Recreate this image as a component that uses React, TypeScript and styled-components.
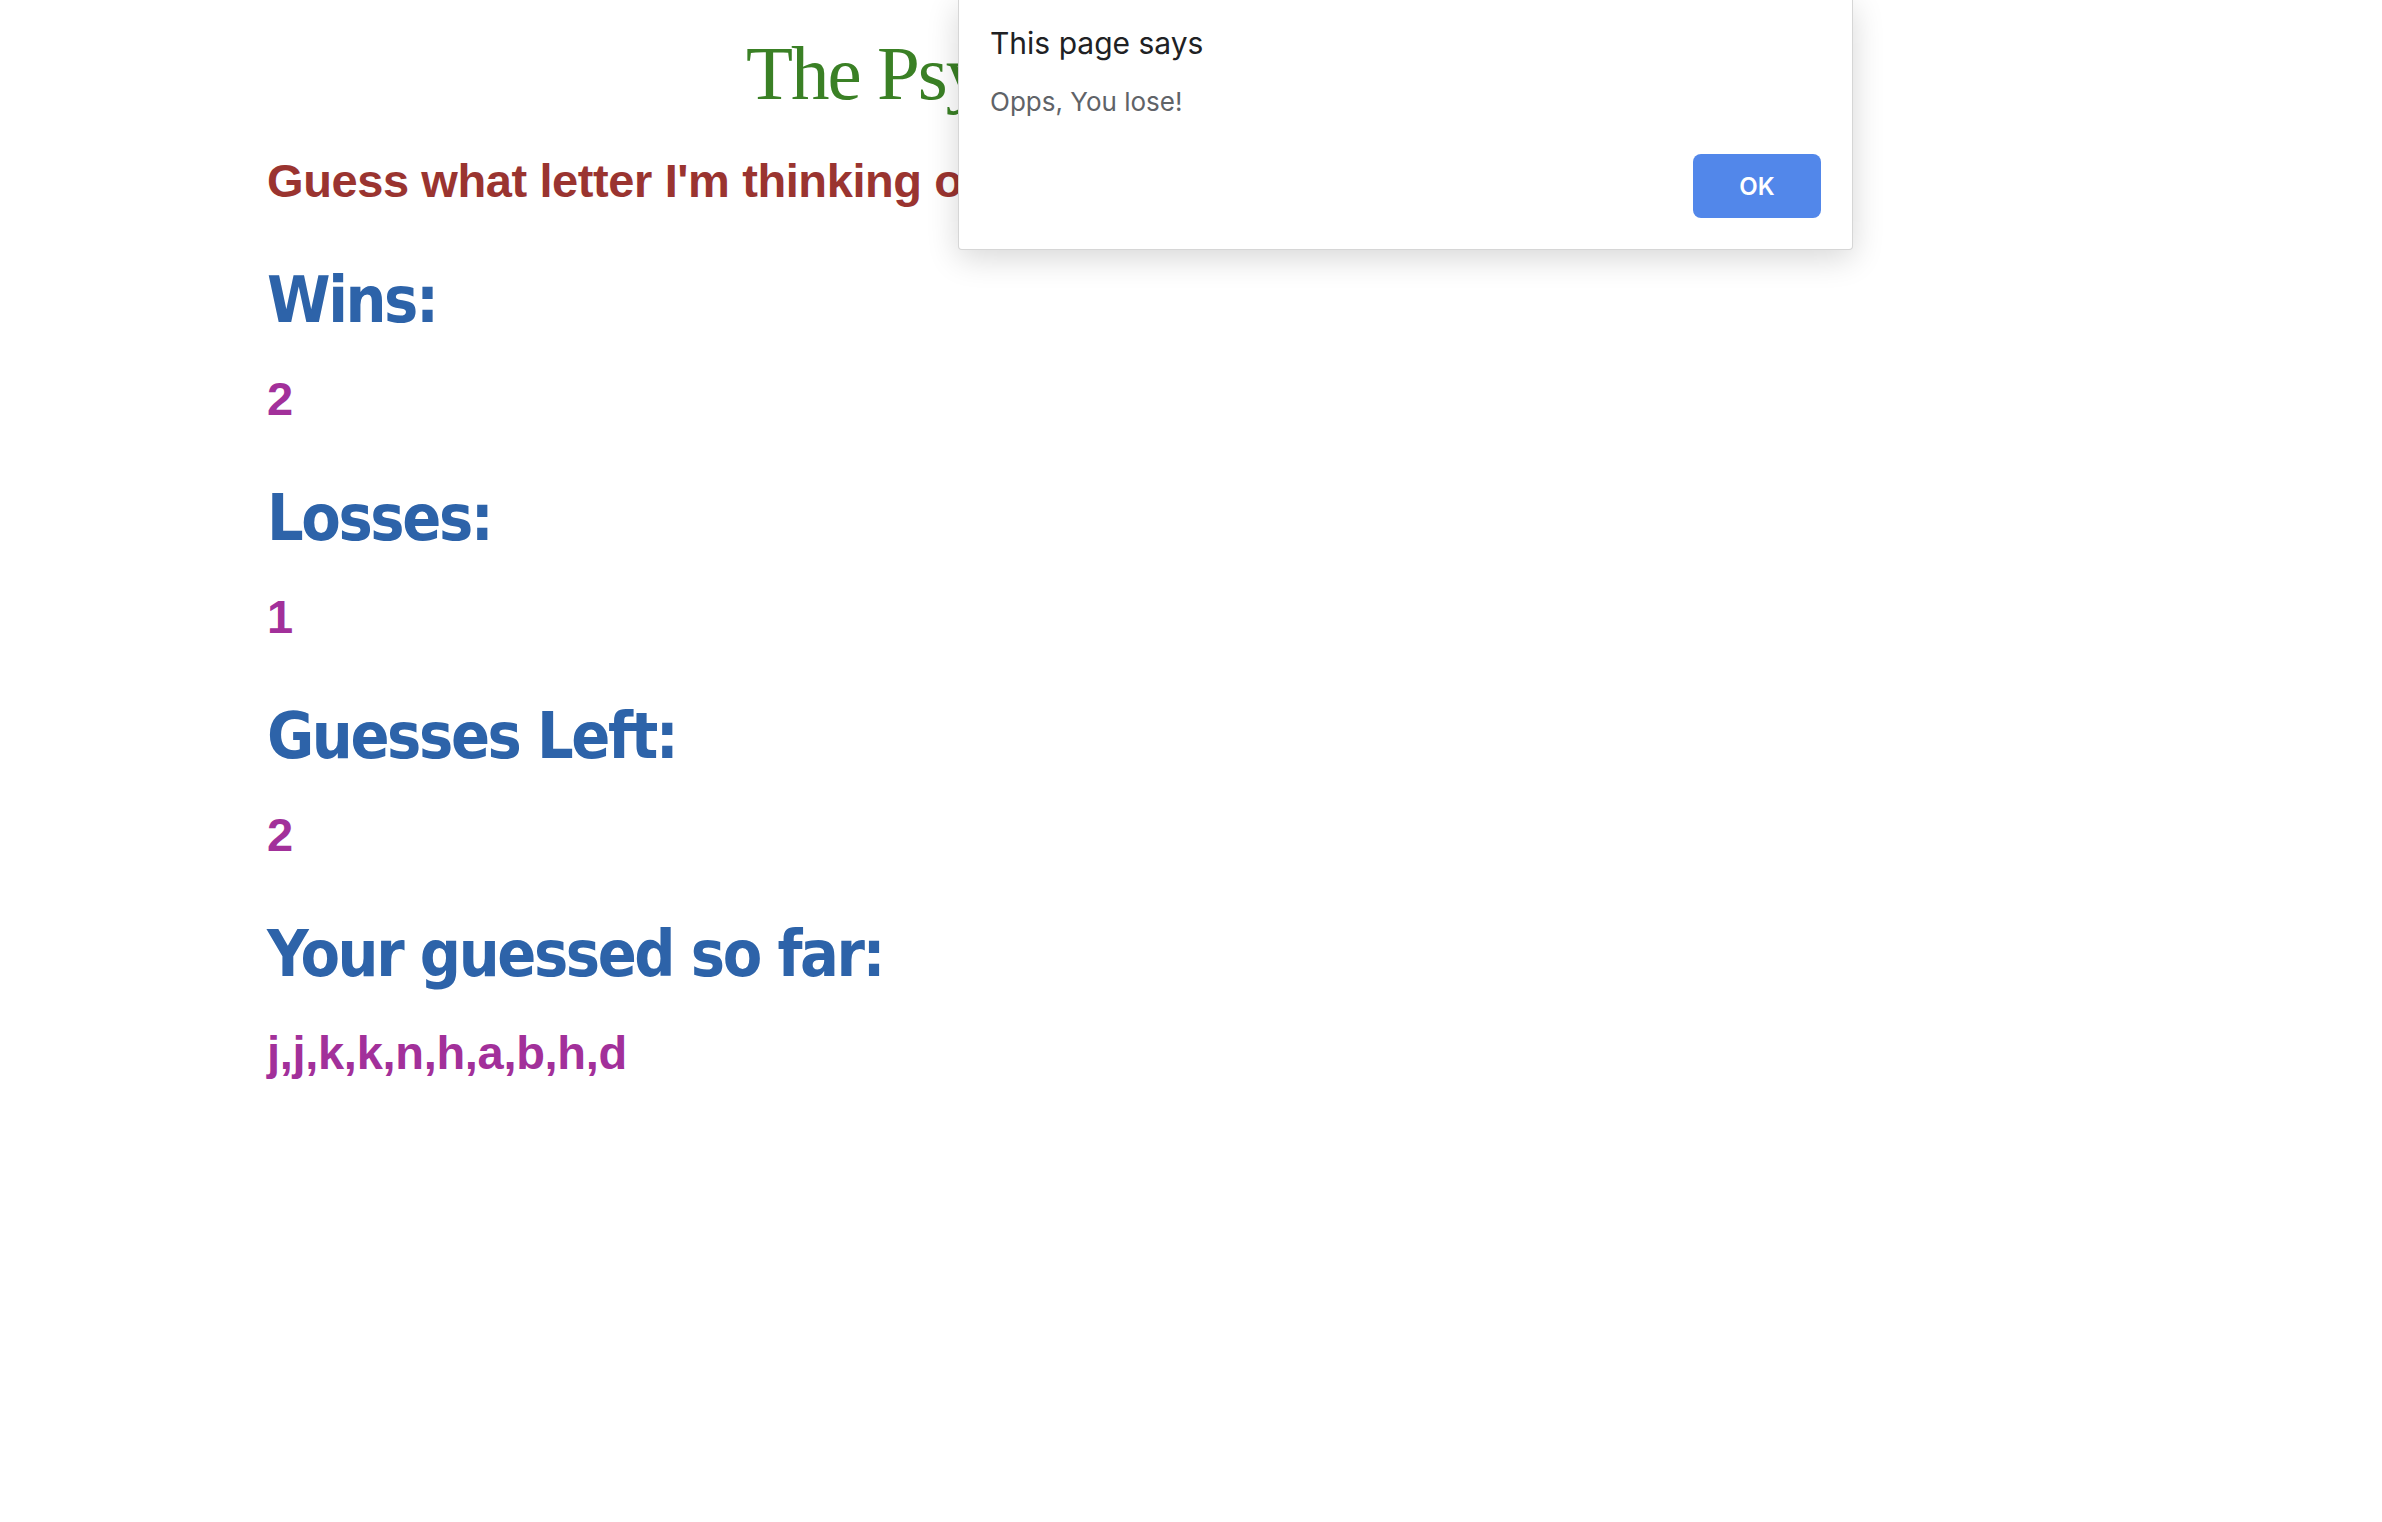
import styled, { createGlobalStyle } from 'styled-components';

const GlobalStyle = createGlobalStyle`
  html, body {
    margin: 0;
    padding: 0;
    background: #ffffff;
  }
`;

const COLORS = {
  title: '#3a8025',
  prompt: '#9a3430',
  label: '#2d63a9',
  value: '#a2309a',
  dialogText: '#202124',
  dialogMuted: '#5f6368',
  button: '#5287ea',
};

const Page = styled.div`
  position: relative;
  min-height: 1522px;
  padding: 29px 0 0 267px;
  box-sizing: border-box;
`;

const Container = styled.div`
  width: 1540px;
`;

const Title = styled.h1`
  margin: 0;
  padding-left: 479px;
  font-family: 'Liberation Serif', 'Times New Roman', serif;
  font-size: 77px;
  font-weight: normal;
  line-height: 88px;
  letter-spacing: -2px;
  color: ${COLORS.title};
`;

const Prompt = styled.h2`
  margin: 36px 0 0;
  font-family: 'Liberation Sans', Arial, sans-serif;
  font-size: 47px;
  font-weight: bold;
  line-height: 56px;
  letter-spacing: -0.4px;
  color: ${COLORS.prompt};
`;

const StatLabel = styled.h1`
  margin: 53px 0 33px;
  font-family: 'DejaVu Sans Condensed', 'DejaVu Sans', sans-serif;
  font-stretch: condensed;
  font-size: 64px;
  font-weight: bold;
  line-height: 76px;
  letter-spacing: -2.4px;
  color: ${COLORS.label};
`;

const StatValue = styled.h2`
  margin: 0;
  font-family: 'Liberation Sans', Arial, sans-serif;
  font-size: 47px;
  font-weight: bold;
  line-height: 56px;
  letter-spacing: -0.3px;
  color: ${COLORS.value};
`;

// browser alert box laid over the page
const AlertBox = styled.div`
  position: absolute;
  top: -1px;
  left: 958px;
  width: 895px;
  box-sizing: border-box;
  padding: 25px 31px 31px 31px;
  background: #ffffff;
  border: 1px solid rgba(0, 0, 0, 0.16);
  border-radius: 0 0 4px 4px;
  box-shadow: 0 8px 32px rgba(0, 0, 0, 0.16);
  font-family: Inter, Roboto, 'Noto Sans', sans-serif;
  display: flex;
  flex-direction: column;
`;

const AlertTitle = styled.div`
  font-size: 30px;
  line-height: 36px;
  color: ${COLORS.dialogText};
`;

const AlertMessage = styled.div`
  margin-top: 25px;
  font-size: 26px;
  line-height: 32px;
  color: ${COLORS.dialogMuted};
`;

const AlertActions = styled.div`
  display: flex;
  justify-content: flex-end;
  margin-top: 36px;
`;

const OkButton = styled.button`
  width: 128px;
  height: 64px;
  border: none;
  border-radius: 8px;
  background: ${COLORS.button};
  color: #ffffff;
  font-family: Inter, Roboto, sans-serif;
  font-size: 24px;
  font-weight: 600;
`;

const stats = [
  { label: 'Wins:', value: '2' },
  { label: 'Losses:', value: '1' },
  { label: 'Guesses Left:', value: '2' },
  { label: 'Your guessed so far:', value: 'j,j,k,k,n,h,a,b,h,d' },
];

const App = () => {
  return (
    <Page>
      <GlobalStyle />
      <Container>
        <Title>The Psychic Game</Title>
        <Prompt>Guess what letter I'm thinking of</Prompt>
        {stats.map((s) => (
          <div key={s.label}>
            <StatLabel>{s.label}</StatLabel>
            <StatValue>{s.value}</StatValue>
          </div>
        ))}
      </Container>
      <AlertBox>
        <AlertTitle>This page says</AlertTitle>
        <AlertMessage>Opps, You lose!</AlertMessage>
        <AlertActions>
          <OkButton>OK</OkButton>
        </AlertActions>
      </AlertBox>
    </Page>
  );
};

export default App;
